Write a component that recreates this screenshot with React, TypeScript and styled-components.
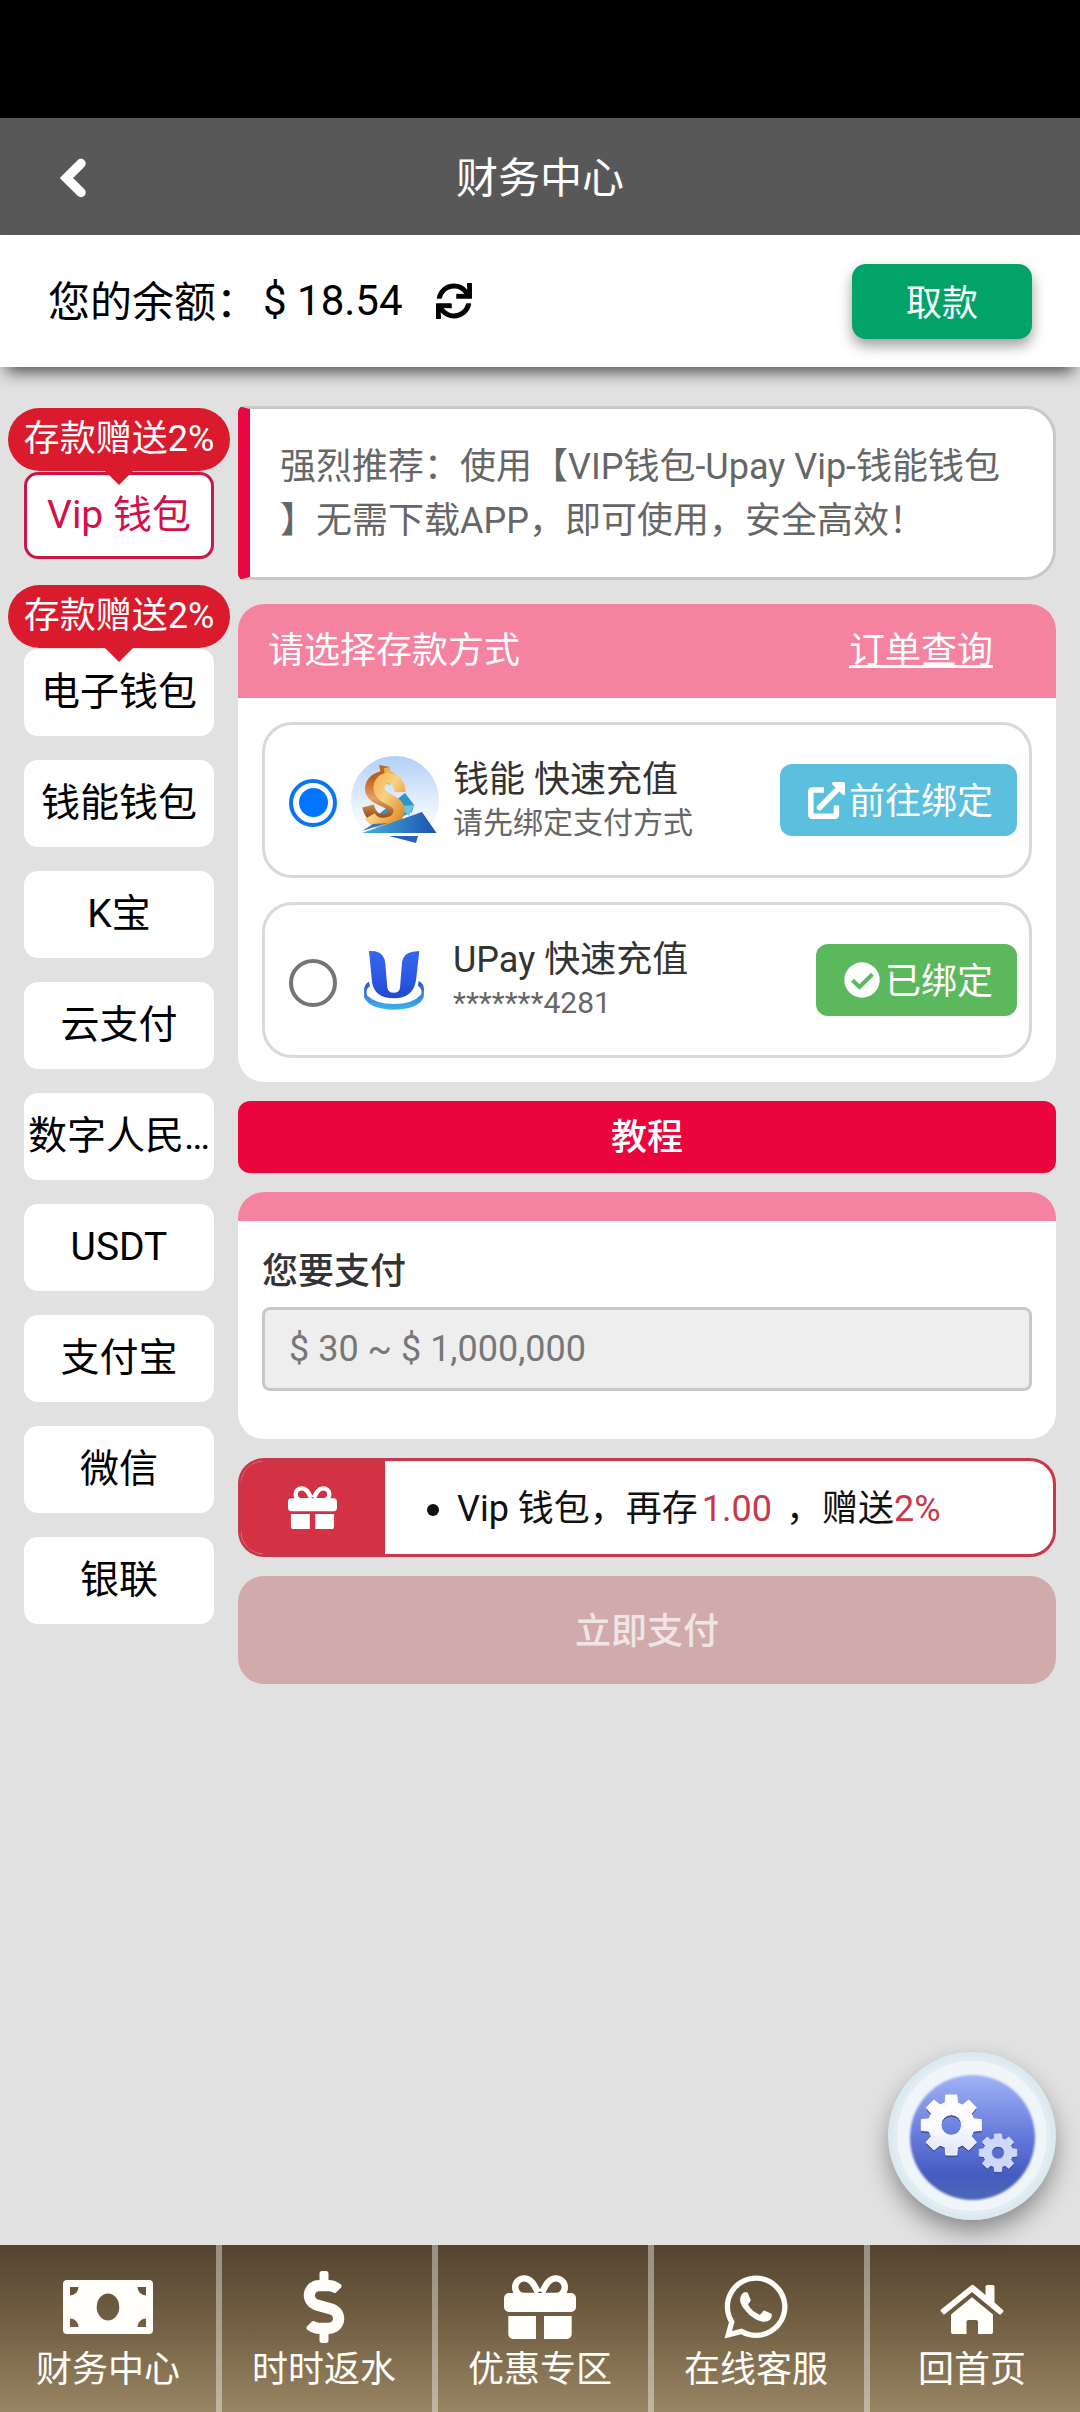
import React from 'react';
import styled, { createGlobalStyle, css } from 'styled-components';
import { FaDollarSign, FaSync, FaWhatsapp } from 'react-icons/fa';

const GlobalStyle = createGlobalStyle`
  *, *::before, *::after { box-sizing: border-box; }
  body {
    margin: 0;
    background: #e1e1e1;
    font-family: Roboto, "Noto Sans CJK SC", sans-serif;
    line-height: 1.4;
    color: #111;
  }
  button { font: inherit; border: 0; margin: 0; padding: 0; }
  svg { display: block; flex: none; }
`;

const Page = styled.div`
  width: 1080px;
  height: 2412px;
  display: flex;
  flex-direction: column;
  overflow: hidden;
  background: #e1e1e1;
`;

const StatusArea = styled.div`
  height: 118px;
  flex: none;
  background: #000;
`;

const Header = styled.header`
  height: 117px;
  flex: none;
  display: grid;
  grid-template-columns: 1fr auto 1fr;
  align-items: center;
  padding: 2px 60px 0;
  background: #585858;
  color: #fff;
`;

const BackButton = styled.button`
  display: flex;
  justify-self: start;
  background: none;
  color: #fff;
`;

const Title = styled.h1`
  margin: 2px 0 0;
  font-size: 42px;
  font-weight: 400;
  line-height: 60px;
`;

const BalanceBar = styled.section`
  height: 132px;
  flex: none;
  display: flex;
  align-items: center;
  padding: 0 48px;
  background: #fff;
  box-shadow: 0 11px 15px -6px rgba(0, 0, 0, 0.65);
  font-size: 42px;
  line-height: 60px;
  color: #000;
`;

const BalanceLabel = styled.span`
  padding-top: 3px;
`;

const Amount = styled.span`
  margin: 0 33px 0 5px;
`;

const RefreshIcon = styled(FaSync)`
  font-size: 36px;
`;

const WithdrawButton = styled.button`
  width: 180px;
  height: 75px;
  margin-left: auto;
  padding-top: 5px;
  border-radius: 14px;
  background: #02a368;
  color: #fff;
  font-size: 36px;
  line-height: 50px;
  box-shadow: 0 7px 14px rgba(0, 0, 0, 0.38);
`;

const Main = styled.main`
  flex: 1;
  display: flex;
  align-items: flex-start;
  gap: 24px;
  padding: 39px 24px 0;
`;

const Sidebar = styled.nav`
  width: 190px;
  flex: none;
  display: flex;
  flex-direction: column;
  gap: 24px;
`;

const Channel = styled.div`
  display: flex;
  flex-direction: column;
  align-items: center;
`;

const Badge = styled.span`
  position: relative;
  z-index: 1;
  margin: 2px -16px 1px;
  width: 222px;
  height: 63px;
  border-radius: 32px;
  background: #da1b2e;
  color: #fff;
  font-size: 36px;
  line-height: 62px;
  text-align: center;
  white-space: nowrap;

  &::after {
    content: '';
    position: absolute;
    left: 50%;
    top: 62px;
    transform: translateX(-50%);
    border: 15px solid transparent;
    border-top-color: #da1b2e;
    border-bottom: 0;
  }
`;

const ChannelButton = styled.button<{ $active?: boolean }>`
  width: 190px;
  height: 87px;
  border-radius: 14px;
  background: #fff;
  color: #000;
  font-size: 39px;
  line-height: 54px;
  white-space: nowrap;
  padding-bottom: 2px;
  ${(p) =>
    p.$active &&
    css`
      border: 3px solid #c8174b;
      color: #d3104a;
    `}
`;

const Content = styled.div`
  flex: 1;
  display: flex;
  flex-direction: column;
  gap: 19px;
`;

const Notice = styled.p`
  margin: 0 0 5px;
  height: 174px;
  padding: 31px 0 0 30px;
  border: 3px solid #c8c8c8;
  border-left: 12px solid #e80741;
  border-radius: 6px 30px 30px 6px;
  background: #fff;
  color: #666;
  font-size: 36px;
  line-height: 54px;
  white-space: nowrap;
`;

const Card = styled.section<{ $height: number }>`
  height: ${(p) => p.$height}px;
  border-radius: 26px;
  overflow: hidden;
  background: #fff;
`;

const CardHeader = styled.div<{ $height: number }>`
  height: ${(p) => p.$height}px;
  display: flex;
  justify-content: space-between;
  align-items: center;
  padding: 0 63px 0 30px;
  background: #f5829f;
  color: #fff;
  font-size: 36px;
`;

const OrdersLink = styled.a`
  text-decoration: underline;
  text-decoration-thickness: 3px;
  text-underline-offset: 2px;
`;

const CardBody = styled.div`
  display: flex;
  flex-direction: column;
  gap: 24px;
  padding: 24px;
`;

const Option = styled.label`
  height: 156px;
  display: flex;
  align-items: center;
  padding: 0 12px 0 24px;
  border: 3px solid #d9d9d9;
  border-radius: 30px;
`;

const Radio = styled.span<{ $checked?: boolean }>`
  width: 48px;
  height: 48px;
  flex: none;
  display: grid;
  place-items: center;
  margin: 5px 14px 0 0;
  border: 4px solid ${(p) => (p.$checked ? '#0b75f0' : '#757575')};
  border-radius: 50%;

  &::after {
    content: '';
    width: 29px;
    height: 29px;
    border-radius: 50%;
    background: ${(p) => (p.$checked ? '#0075ff' : 'transparent')};
  }
`;

const OptionText = styled.div`
  display: flex;
  flex-direction: column;
  margin: 0 auto 0 14px;
`;

const OptionName = styled.span`
  font-size: 36px;
  line-height: 50px;
  color: #333;
`;

const OptionHint = styled.span`
  margin-top: -2px;
  padding-bottom: 2px;
  font-size: 30px;
  line-height: 40px;
  color: #666;
`;

const BindButton = styled.button<{ $color: string }>`
  height: 72px;
  display: flex;
  align-items: center;
  padding: 0 24px;
  border-radius: 12px;
  background: ${(p) => p.$color};
  color: #fff;
  font-size: 36px;
  line-height: 50px;
`;

const BindLabel = styled.span`
  padding-top: 3px;
`;

const IconSlot = styled.span`
  width: 45px;
  display: flex;
  justify-content: center;
`;

const TutorialButton = styled.button`
  height: 72px;
  padding-top: 3px;
  border-radius: 12px;
  background: #ea063d;
  color: #fff;
  font-size: 36px;
  font-weight: 500;
`;

const AmountForm = styled.div`
  padding: 24px;
`;

const FieldLabel = styled.div`
  height: 62px;
  padding-top: 2px;
  font-size: 36px;
  font-weight: 500;
  line-height: 50px;
  color: #333;
`;

const AmountInput = styled.input`
  display: block;
  width: 770px;
  height: 84px;
  padding: 0 24px 0;
  border: 3px solid #c8c8c8;
  border-radius: 8px;
  background: #eee;
  font: inherit;
  font-size: 36px;

  &::placeholder { color: #777; opacity: 1; }
`;

const Bonus = styled.section`
  height: 99px;
  display: flex;
  border: 3px solid #c8374a;
  border-radius: 26px;
  background: #fff;
  overflow: hidden;
`;

const BonusIcon = styled.div`
  width: 144px;
  display: grid;
  place-items: center;
  padding-right: 2px;
  background: #d33244;
  color: #fff;
`;

const BonusText = styled.div`
  display: flex;
  align-items: center;
  padding: 2px 0 0 42px;
  font-size: 36px;
  line-height: 50px;
  white-space: pre;
`;

const Bullet = styled.span`
  width: 12px;
  height: 12px;
  margin: 2px 18px 0 0;
  border-radius: 50%;
  background: #111;
`;

const Highlight = styled.span<{ $spaced?: boolean }>`
  color: #c9374a;
  margin: ${(p) => (p.$spaced ? '0 14px 0 4px' : '0')};
`;

const PayButton = styled.button`
  height: 108px;
  padding-top: 4px;
  border-radius: 26px;
  background: #d1abac;
  color: #efe5e5;
  font-size: 36px;
  font-weight: 500;
`;

const BottomBar = styled.footer`
  height: 167px;
  flex: none;
  display: grid;
  grid-template-columns: repeat(5, 216px);
  background: linear-gradient(#544330, #786547 55%, #998564);
`;

const Tab = styled.a<{ $divided?: boolean }>`
  display: flex;
  flex-direction: column;
  align-items: center;
  padding-top: 26px;
  color: #fffefa;
  font-size: 36px;
  line-height: 50px;
  ${(p) => p.$divided && css`box-shadow: inset 6px 0 rgba(255, 255, 255, 0.4);`}
`;

const TabIcon = styled.span`
  height: 72px;
  display: flex;
  align-items: center;
  margin-bottom: 2px;
  font-size: 72px;
`;

const FloatingButton = styled.button`
  position: fixed;
  left: 888px;
  top: 2052px;
  width: 168px;
  height: 168px;
  border-radius: 50%;
  background: #dce9f1;
  box-shadow: 0 12px 26px -2px rgba(0, 0, 0, 0.42);
`;

const BackIcon = () => (
  <svg width="27" height="42" viewBox="0 0 27 42" fill="none" stroke="currentColor" strokeWidth="9.500">
    <path d="M21 6.500 6.500 21 21 35.500" strokeLinecap="round" />
  </svg>
);

const GiftIcon = ({ width }: { width: number }) => (
  <svg width={width} height={(width * 64) / 72} viewBox="0 0 72 64" fill="currentColor">
    <path d="M34 21H20a8.8 8.8 0 0 1 0-17.6c7 0 10 6 14 14M38 21h14a8.8 8.8 0 0 0 0-17.6c-7 0-10 6-14 14" fill="none" stroke="currentColor" strokeWidth="6.4" />
    <rect y="18" width="72" height="19" rx="5" />
    <path d="M4.300 41H32v23H9a4.700 4.700 0 0 1-4.700-4.700zM40 41h27.700v18.300A4.700 4.700 0 0 1 63 64H40z" />
  </svg>
);

const MoneyIcon = () => (
  <svg width="90" height="54" viewBox="0 0 90 54" fill="currentColor">
    <path
      fillRule="evenodd"
      d="M4 0H86A4 4 0 0 1 90 4V50A4 4 0 0 1 86 54H4A4 4 0 0 1 0 50V4A4 4 0 0 1 4 0ZM45 13.500A11.300 13.500 0 1 0 45 40.500A11.300 13.500 0 1 0 45 13.500ZM7 7H15.500A8.500 8.500 0 0 1 7 15.500ZM83 7V15.500A8.500 8.500 0 0 1 74.500 7ZM7 47V38.500A8.500 8.500 0 0 1 15.500 47ZM83 47H74.500A8.500 8.500 0 0 1 83 38.500Z"
    />
  </svg>
);

const HomeIcon = () => (
  <svg width="64" height="54" viewBox="0 0 64 54" fill="currentColor">
    <path d="M31 5.500q1.500-1.300 3 0L45.500 15V6.500q0-1.500 1.500-1.500h6q1.500 0 1.500 1.500v16L63 30q.8 1 0 2l-2 2.200q-1 .8-2 0L32 12 5 34q-1 .8-2 0L1 31.500q-.8-1 0-2z" />
    <path d="M32 17.300 53 34.500V52q0 2-2 2H38V42q0-2-2-2h-7.500q-2 0-2 2v12H13q-2 0-2-2V34.500z" />
  </svg>
);

const ExternalIcon = () => (
  <svg width="37" height="37" viewBox="0 0 37 37" fill="none" stroke="#fff" strokeWidth="5.500" strokeLinejoin="round">
    <path d="M16 8H4.500Q2.800 8 2.800 9.700V32.500Q2.800 34.200 4.500 34.200H26.700Q28.400 34.200 28.400 32.500V23.500" />
    <path d="M11.500 25.500 29 8" strokeLinecap="round" />
    <path d="M25.500 1.500H35.500V11.500Z" fill="#fff" strokeWidth="3" />
  </svg>
);

const CheckIcon = () => (
  <svg width="36" height="36" viewBox="0 0 36 36">
    <circle cx="18" cy="18" r="17.700" fill="#fff" />
    <path d="M8.500 18.300 15.500 25 28.500 12.300" fill="none" stroke="#5cb85c" strokeWidth="4" />
  </svg>
);

const CoinLogo = () => (
  <svg width="88" height="88" viewBox="0 0 88 88">
    <defs>
      <linearGradient id="sky" x1="0" y1="0" x2="0" y2="1">
        <stop offset="0" stopColor="#b2d0f6" />
        <stop offset=".55" stopColor="#e6f0fc" />
        <stop offset=".85" stopColor="#fff" />
      </linearGradient>
      <linearGradient id="gold" x1="0" y1="0" x2="1" y2="1">
        <stop offset="0" stopColor="#efb04c" />
        <stop offset=".45" stopColor="#f9d183" />
        <stop offset="1" stopColor="#dd8a25" />
      </linearGradient>
      <linearGradient id="copper" x1="0" y1="0" x2="0" y2="1">
        <stop offset="0" stopColor="#b95f1c" />
        <stop offset=".5" stopColor="#e8a263" />
        <stop offset="1" stopColor="#8a4412" />
      </linearGradient>
      <linearGradient id="sea" x1="0" y1="0" x2="1" y2="0">
        <stop offset="0" stopColor="#46b1d6" />
        <stop offset="1" stopColor="#1c52b4" />
      </linearGradient>
    </defs>
    <circle cx="44" cy="44" r="44" fill="url(#sky)" />
    <path d="M54 37 63 49 61 56 38 67 28 58z" fill="#2f93cc" />
    <path d="M48 50 63 49 58 60z" fill="#6cc4e4" />
    <path d="M28 9 39 11 38 18 30 18z" fill="#b96820" />
    <path d="M42 24C34 18 20 22 20 33 20 45 44 44 43 55 41 66 22 70 17 50" fill="none" stroke="url(#copper)" strokeWidth="12" />
    <path d="M33 12 39 11 40 20 34 21z" fill="#f1ae50" />
    <path d="M49 36C49 20 30 17 28 31 27 44 50 43 48 56 46 68 26 72 19 60" fill="none" stroke="url(#gold)" strokeWidth="11" />
    <path d="M11 77 71 56 85.500 77z" fill="url(#sea)" />
    <path d="M11 75 22 68 37 67z" fill="#2b78c6" />
    <path d="M38 80H67L65 87z" fill="#2563bd" />
  </svg>
);

const UPayLogo = () => (
  <svg width="88" height="88" viewBox="363 707 264 264">
    <defs>
      <linearGradient id="arm" x1="0" y1="0" x2="0" y2="1">
        <stop offset="0" stopColor="#3268ee" />
        <stop offset=".6" stopColor="#2c57e2" />
        <stop offset="1" stopColor="#2148cf" />
      </linearGradient>
      <linearGradient id="ring" x1="0" y1="0" x2="0" y2="1">
        <stop offset="0" stopColor="#2a53d0" />
        <stop offset="1" stopColor="#3fb4ea" />
      </linearGradient>
    </defs>
    <path d="M417 844Q401 852 402 872V891Q420 928 492 928 565 928 581 891L582 868Q582 850 566 842L564 856Q580 868 572 884 548 911 492 911 438 911 412 886 404 868 420 858Z" fill="url(#ring)" />
    <path d="M417 752 436 753Q463 758 466 790L472 862Q475 877 491 877 508 877 510 862L516 786Q520 758 548 754L568 752 558 840Q550 894 491 894 434 894 426 845Z" fill="url(#arm)" />
  </svg>
);

const gearPath = (cx: number, cy: number, outer: number, root: number, hole: number) => {
  const teeth = 8;
  const points: string[] = [];
  for (let i = 0; i < teeth; i++) {
    const mid = (i / teeth) * Math.PI * 2;
    const corners: [number, number][] = [
      [root, -0.27],
      [outer, -0.18],
      [outer, 0.18],
      [root, 0.27],
    ];
    corners.forEach(([r, offset]) => {
      points.push(`${(cx + r * Math.cos(mid + offset)).toFixed(2)} ${(cy + r * Math.sin(mid + offset)).toFixed(2)}`);
    });
  }
  return `M${points.join('L')}ZM${cx - hole} ${cy}a${hole} ${hole} 0 1 0 ${hole * 2} 0a${hole} ${hole} 0 1 0 ${-hole * 2} 0Z`;
};

const GearsIcon = () => (
  <svg width="168" height="168" viewBox="0 0 168 168">
    <defs>
      <linearGradient id="disc" x1="0" y1="0" x2="0" y2="1">
        <stop offset="0" stopColor="#a0b3f7" />
        <stop offset=".5" stopColor="#6379d9" />
        <stop offset=".8" stopColor="#455cc0" />
        <stop offset="1" stopColor="#4d68b5" />
      </linearGradient>
      <linearGradient id="cog" x1="0" y1="0" x2="0" y2="1">
        <stop offset="0" stopColor="#fff" />
        <stop offset=".5" stopColor="#fbfbff" />
        <stop offset="1" stopColor="#dfe4fd" />
      </linearGradient>
      <filter id="soft" x="-5%" y="-5%" width="110%" height="110%">
        <feGaussianBlur stdDeviation="1" />
      </filter>
    </defs>
    <circle cx="84" cy="84" r="79" fill="#e2edf3" />
    <circle cx="84" cy="84" r="75" fill="#f0f5f9" />
    <circle cx="84.500" cy="85.500" r="62.500" fill="url(#disc)" filter="url(#soft)" />
    <g fillRule="evenodd" strokeLinejoin="round">
      <path d={gearPath(63.3, 75, 30.5, 23, 10.3)} fill="#3b4f9c" />
      <path d={gearPath(63.3, 73, 30.5, 23, 10.3)} fill="url(#cog)" stroke="#fff" strokeWidth="1" />
      <path d={gearPath(110, 102.5, 19, 14.5, 6.5)} fill="#3b4f9c" />
      <path d={gearPath(110, 100.7, 19, 14.5, 6.5)} fill="#cfd8fb" stroke="#cfd8fb" strokeWidth="1" />
    </g>
  </svg>
);

const channels: { name: string; badge?: string; active?: boolean }[] = [
  { name: 'Vip 钱包', badge: '存款赠送2%', active: true },
  { name: '电子钱包', badge: '存款赠送2%' },
  { name: '钱能钱包' },
  { name: 'K宝' },
  { name: '云支付' },
  { name: '数字人民…' },
  { name: 'USDT' },
  { name: '支付宝' },
  { name: '微信' },
  { name: '银联' },
];

const tabs = [
  { label: '财务中心', icon: <MoneyIcon /> },
  { label: '时时返水', icon: <FaDollarSign /> },
  { label: '优惠专区', icon: <GiftIcon width={72} /> },
  { label: '在线客服', icon: <FaWhatsapp /> },
  { label: '回首页', icon: <HomeIcon /> },
];

export default function App() {
  return (
    <Page>
      <GlobalStyle />
      <StatusArea />
      <Header>
        <BackButton aria-label="返回">
          <BackIcon />
        </BackButton>
        <Title>财务中心</Title>
      </Header>
      <BalanceBar>
        <BalanceLabel>您的余额：</BalanceLabel>
        <Amount>$ 18.54</Amount>
        <RefreshIcon />
        <WithdrawButton>取款</WithdrawButton>
      </BalanceBar>

      <Main>
        <Sidebar>
          {channels.map((c) => (
            <Channel key={c.name}>
              {c.badge && <Badge>{c.badge}</Badge>}
              <ChannelButton $active={c.active}>{c.name}</ChannelButton>
            </Channel>
          ))}
        </Sidebar>

        <Content>
          <Notice>
            强烈推荐：使用【VIP钱包-Upay Vip-钱能钱包
            <br />
            】无需下载APP，即可使用，安全高效！
          </Notice>

          <Card $height={478}>
            <CardHeader $height={94}>
              <span>请选择存款方式</span>
              <OrdersLink>订单查询</OrdersLink>
            </CardHeader>
            <CardBody>
              <Option>
                <Radio $checked />
                <CoinLogo />
                <OptionText>
                  <OptionName>钱能 快速充值</OptionName>
                  <OptionHint>请先绑定支付方式</OptionHint>
                </OptionText>
                <BindButton $color="#5bc0de">
                  <IconSlot><ExternalIcon /></IconSlot>
                  <BindLabel>前往绑定</BindLabel>
                </BindButton>
              </Option>
              <Option>
                <Radio />
                <UPayLogo />
                <OptionText>
                  <OptionName>UPay 快速充值</OptionName>
                  <OptionHint>*******4281</OptionHint>
                </OptionText>
                <BindButton $color="#5cb85c">
                  <IconSlot><CheckIcon /></IconSlot>
                  <BindLabel>已绑定</BindLabel>
                </BindButton>
              </Option>
            </CardBody>
          </Card>

          <TutorialButton>教程</TutorialButton>

          <Card $height={247}>
            <CardHeader $height={29} />
            <AmountForm>
              <FieldLabel>您要支付</FieldLabel>
              <AmountInput placeholder="$ 30 ~ $ 1,000,000" disabled />
            </AmountForm>
          </Card>

          <Bonus>
            <BonusIcon>
              <GiftIcon width={49} />
            </BonusIcon>
            <BonusText>
              <Bullet />
              <span>Vip 钱包，再存</span>
              <Highlight $spaced>1.00</Highlight>
              <span>，赠送</span>
              <Highlight>2%</Highlight>
            </BonusText>
          </Bonus>

          <PayButton disabled>立即支付</PayButton>
        </Content>
      </Main>

      <BottomBar>
        {tabs.map((t, i) => (
          <Tab key={t.label} $divided={i > 0}>
            <TabIcon>{t.icon}</TabIcon>
            <span>{t.label}</span>
          </Tab>
        ))}
      </BottomBar>

      <FloatingButton aria-label="设置">
        <GearsIcon />
      </FloatingButton>
    </Page>
  );
}
